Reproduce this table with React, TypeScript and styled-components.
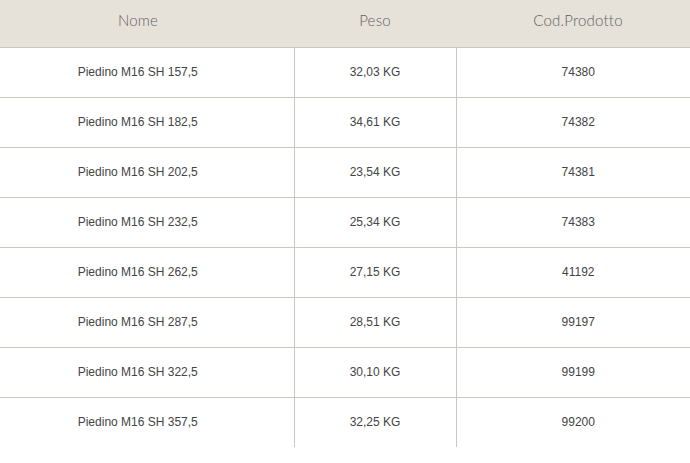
import React from "react";
import styled, { createGlobalStyle } from "styled-components";

const Global = createGlobalStyle`
  html, body { margin: 0; padding: 0; background: #ffffff; overflow: hidden; }
`;

const Wrap = styled.div`
  width: 690px;
  height: 463px;
  overflow: hidden;
  background: #fff;
`;

const Table = styled.table`
  margin-left: -18px;
  width: 718px;
  border-collapse: collapse;
  table-layout: fixed;
`;

const Th = styled.th<{ $w: number }>`
  width: ${(p) => p.$w}px;
  height: 47px;
  box-sizing: border-box;
  padding: 0 0 7px 0;
  background: #e6e2d9;
  border-bottom: 1px solid #cbc7c0;
  font-family: Lato, "Open Sans", sans-serif;
  font-weight: 300;
  font-size: 15px;
  color: #5f5f5f;
  text-align: center;
  vertical-align: middle;
  letter-spacing: 0.2px;
`;

const Tr = styled.tr<{ $last?: boolean }>`
  height: 50px;
  & > td {
    border-bottom: ${(p) => (p.$last ? "none" : "1px solid #cbc7c0")};
  }
`;

const Td = styled.td<{ $divider?: boolean }>`
  padding: 0;
  height: 49px;
  font-family: "Liberation Sans", Arial, sans-serif;
  font-size: 12px;
  color: #444;
  text-align: center;
  vertical-align: middle;
  border-right: ${(p) => (p.$divider ? "1px solid #cbc7c0" : "none")};
`;

const rows = [
  ["Piedino M16 SH 157,5", "32,03 KG", "74380"],
  ["Piedino M16 SH 182,5", "34,61 KG", "74382"],
  ["Piedino M16 SH 202,5", "23,54 KG", "74381"],
  ["Piedino M16 SH 232,5", "25,34 KG", "74383"],
  ["Piedino M16 SH 262,5", "27,15 KG", "41192"],
  ["Piedino M16 SH 287,5", "28,51 KG", "99197"],
  ["Piedino M16 SH 322,5", "30,10 KG", "99199"],
  ["Piedino M16 SH 357,5", "32,25 KG", "99200"],
];

export default function App() {
  return (
    <Wrap>
      <Global />
      <Table>
        <thead>
          <tr>
            <Th $w={312}>Nome</Th>
            <Th $w={162}>Peso</Th>
            <Th $w={244}>Cod.Prodotto</Th>
          </tr>
        </thead>
        <tbody>
          {rows.map((r, i) => (
            <Tr key={i} $last={i === rows.length - 1}>
              <Td $divider>{r[0]}</Td>
              <Td $divider>{r[1]}</Td>
              <Td>{r[2]}</Td>
            </Tr>
          ))}
        </tbody>
      </Table>
    </Wrap>
  );
}
